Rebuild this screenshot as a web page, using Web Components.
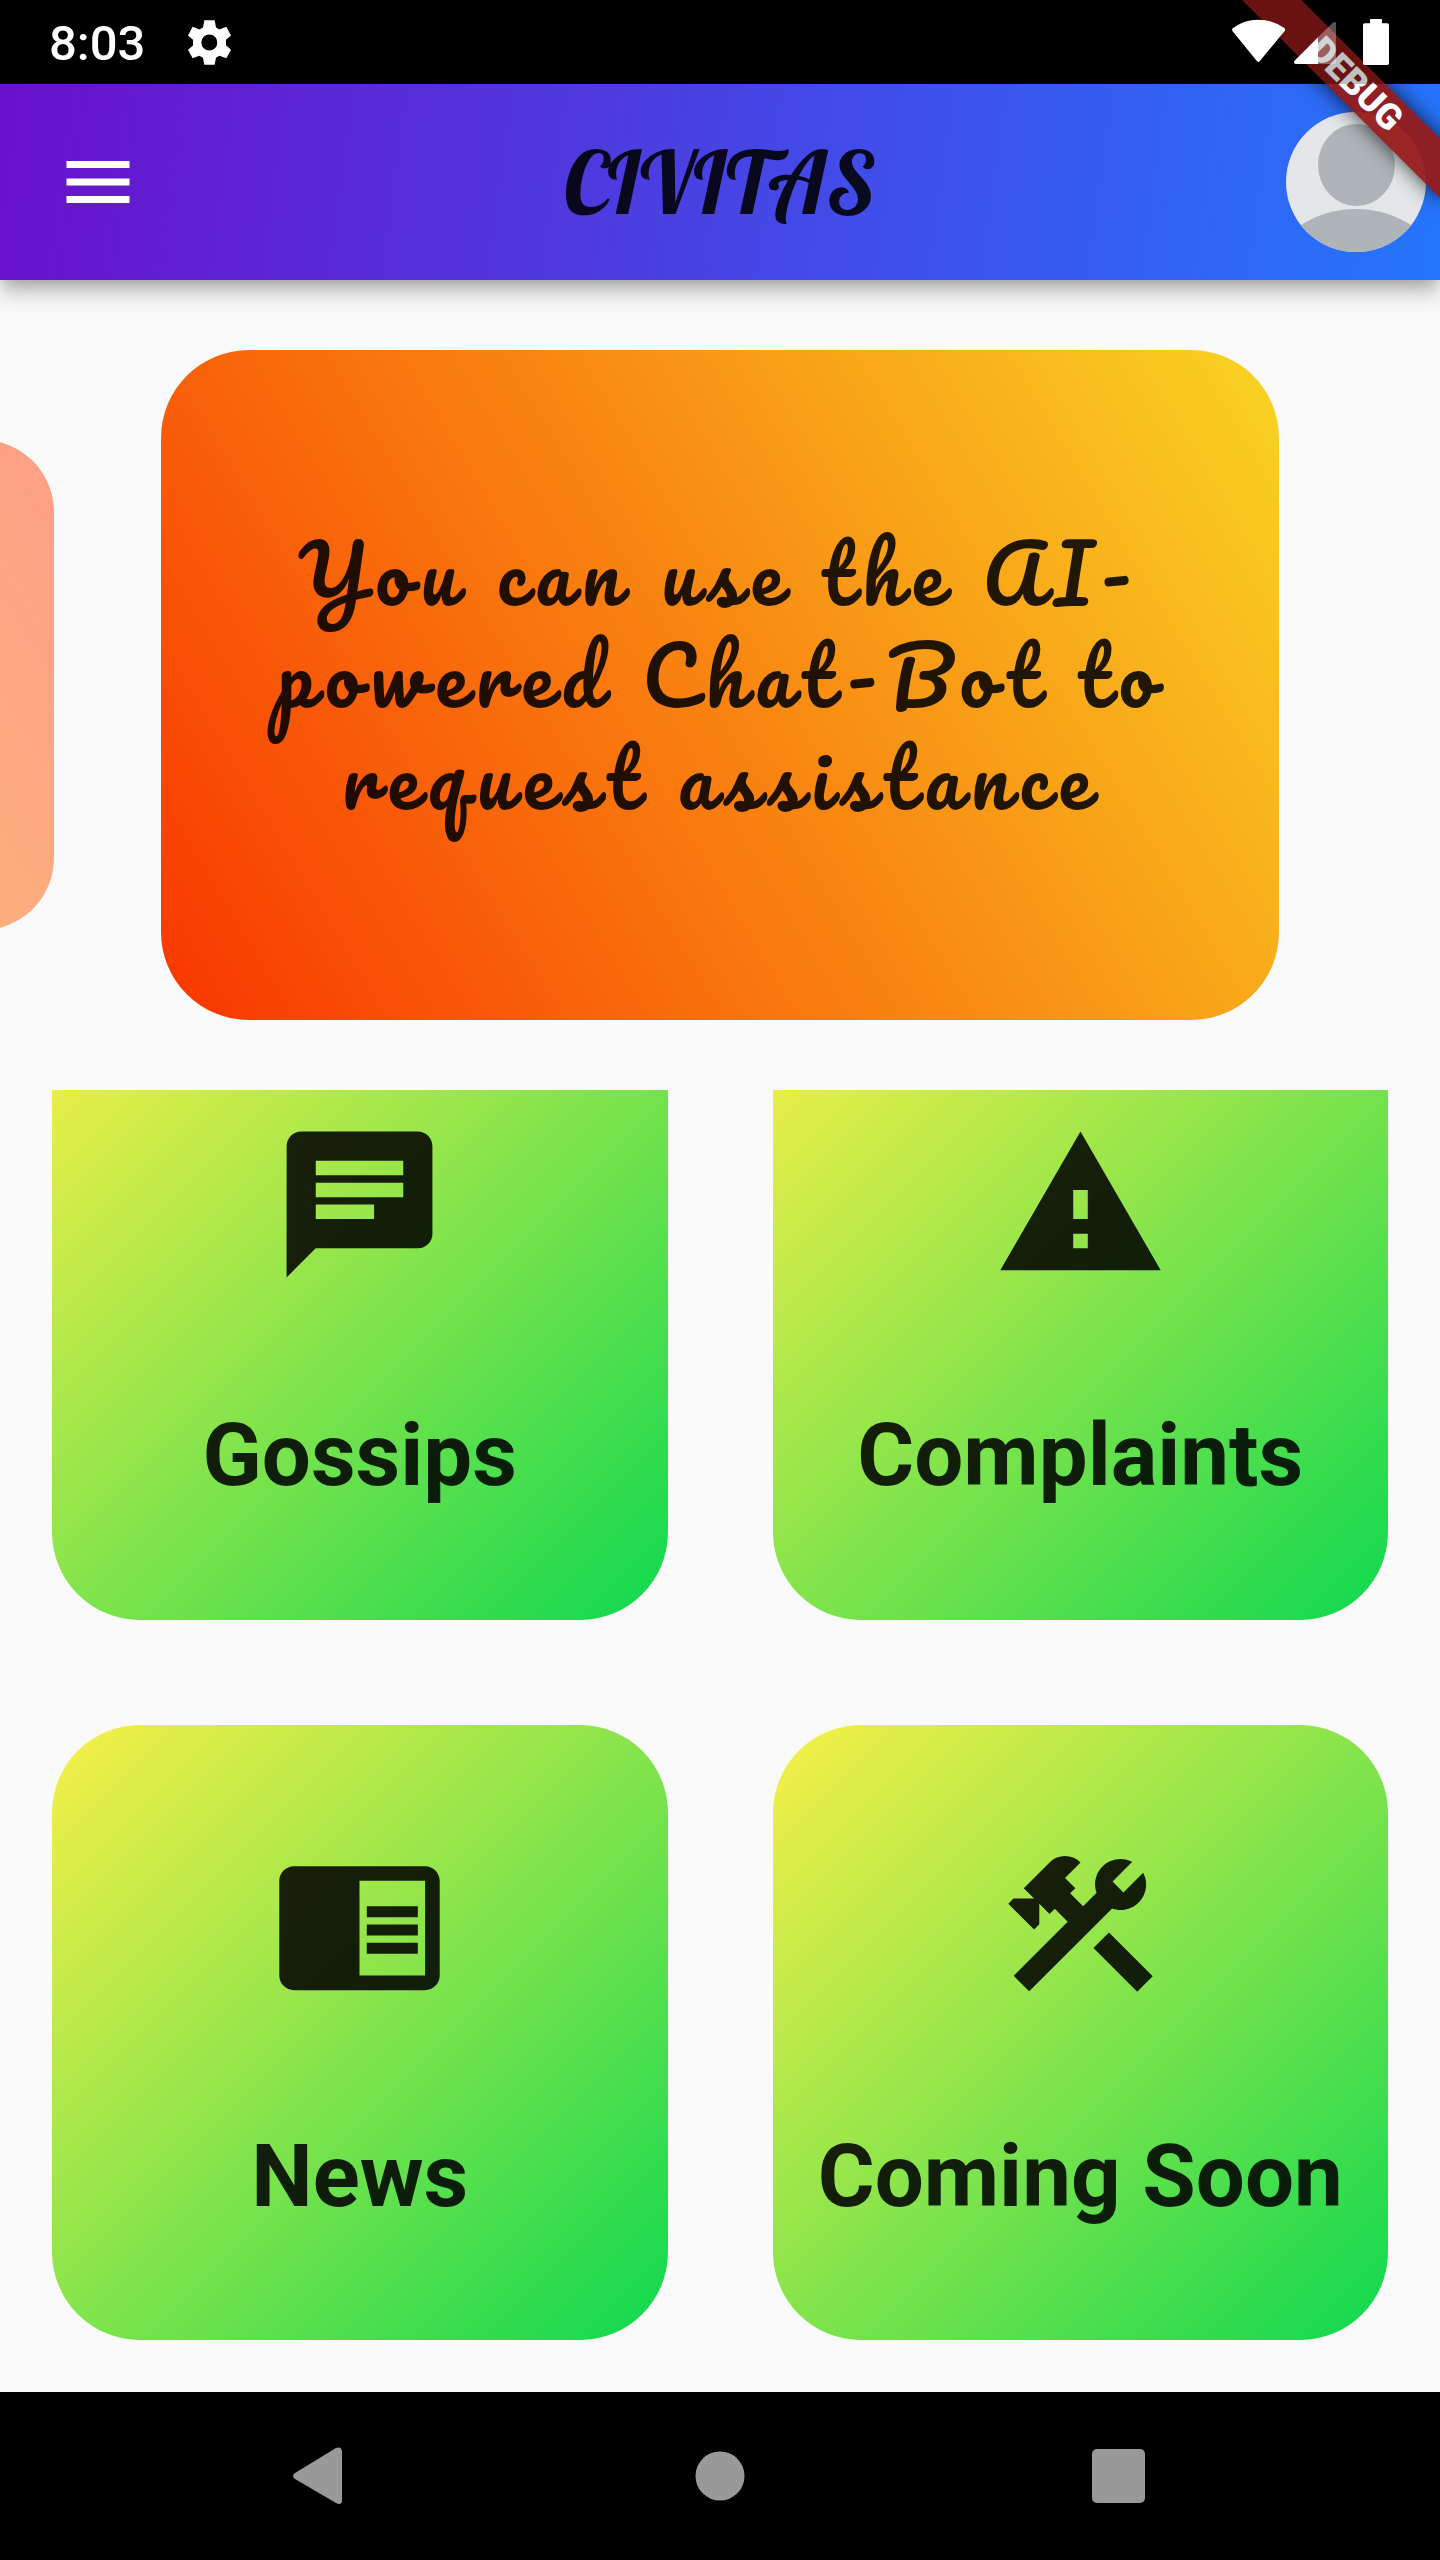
<!DOCTYPE html>
<html lang="en">
<head>
<meta charset="utf-8">
<meta name="viewport" content="width=device-width, initial-scale=1">
<title>Civitas</title>
<style>
  html, body { margin: 0; height: 100%; background: #000; }
  body { font-family: Roboto, "Liberation Sans", sans-serif; color: rgba(0, 0, 0, .87); }
</style>
</head>
<body>
<civitas-app>
  <status-bar slot="status">8:03</status-bar>
  <debug-ribbon slot="ribbon">DEBUG</debug-ribbon>
  <app-bar slot="bar">CIVITAS</app-bar>
  <tip-carousel slot="tips">
    <tip-card aside></tip-card>
    <tip-card>You can use the AI-powered Chat-Bot to request assistance</tip-card>
  </tip-carousel>
  <tile-grid slot="tiles">
    <tile-link icon="chat">Gossips</tile-link>
    <tile-link icon="warning">Complaints</tile-link>
    <tile-link icon="reader">News</tile-link>
    <tile-link icon="tools">Coming Soon</tile-link>
  </tile-grid>
  <system-nav slot="nav"></system-nav>
</civitas-app>

<script>
function define(name, html, setup) {
  const template = document.createElement('template');
  template.innerHTML = html;
  customElements.define(name, class extends HTMLElement {
    constructor() {
      super();
      this.attachShadow({ mode: 'open' }).append(template.content.cloneNode(true));
    }
    connectedCallback() { if (setup) setup(this, this.shadowRoot); }
  });
}

define('civitas-app', `
  <style>
    :host { display: flex; flex-direction: column; position: relative; height: 100vh; overflow: hidden; background: #000; }
    main { flex: 1; min-height: 0; display: flex; flex-direction: column; background: #fafafa; }
  </style>
  <slot name="status"></slot>
  <slot name="ribbon"></slot>
  <slot name="bar"></slot>
  <main><slot name="tips"></slot><slot name="tiles"></slot></main>
  <slot name="nav"></slot>`);

/* The bar is a translucent scrim above the ribbon, with the system icons on top of it. */
define('status-bar', `
  <style>
    :host { display: flex; align-items: center; height: 84px; flex: none; box-sizing: border-box; padding: 0 51px 0 49px; gap: 43px;
      position: relative; z-index: 3; background: rgba(0, 0, 0, .25); color: #fff; font-size: 49px; font-weight: 500; line-height: 60px; }
    time { padding-top: 4px; }
    .signals { margin-left: auto; }
    svg { display: block; fill: #fff; }
  </style>
  <time><slot></slot></time>
  <svg width="43" height="45" viewBox="564 60 129 134" aria-hidden="true">
    <path fill-rule="evenodd" d="M613 60H644L648 82L658 88L679 80L693 106L678 119V135L693 149L679 174L658 167L648 173L644 194H613L609 173L598 167L578 174L564 149L579 136V119L564 106L578 80L598 88L609 82ZM628 103A24 24 0 1 0 628 151A24 24 0 1 0 628 103Z"/>
  </svg>
  <svg class="signals" width="157" height="46" viewBox="216 57 471 138" aria-hidden="true">
    <path d="M219 84Q252 59 295 59Q338 59 373 84Q377 88 374 93L299 184Q295 188 291 184L218 94Q214 88 219 84Z"/>
    <path d="M474 112V192H407Q400 190 403 183Z"/>
    <path opacity=".33" d="M474 112L518 68Q524 64 528 68V187Q528 192 522 192H474Z"/>
    <path d="M630 57H666V70H682Q687 70 687 75V190Q687 195 682 195H614Q609 195 609 190V75Q609 70 614 70H630Z"/>
  </svg>`);

define('debug-ribbon', `
  <style>
    :host { display: block; position: absolute; z-index: 2; top: 98px; right: -140px; width: 280px; height: 42px;
      transform-origin: 140px -98px; transform: rotate(45deg); background: rgba(150, 25, 25, .94);
      box-shadow: 0 0 21px rgba(0, 0, 0, .75); color: #fff; text-align: center; font-size: 36px; font-weight: 900; line-height: 42px; }
  </style>
  <slot></slot>`);

define('app-bar', `
  <style>
    :host { display: grid; grid-template-columns: 1fr auto 1fr; align-items: center; flex: none; height: 196px; position: relative; z-index: 1;
      box-sizing: border-box; padding: 0 14px 0 56px; background: linear-gradient(98deg, #6a11cb, #2575fc);
      box-shadow: 0 7px 14px -4px rgba(0, 0, 0, .2), 0 14px 18px rgba(0, 0, 0, .14), 0 4px 35px rgba(0, 0, 0, .12); }
    button { border: 0; padding: 0; background: none; }
    svg { display: block; }
    .account { justify-self: end; border-radius: 50%; overflow: hidden; }
    h1 { margin: 0; font: 87px/110px Lobster, "Liberation Serif", serif; padding-right: 42px; }
  </style>
  <button aria-label="Menu"><svg width="84" height="84" viewBox="0 0 24 24" fill="#fff"><path d="M3 18h18v-2H3v2zm0-5h18v-2H3v2zm0-7v2h18V6H3z"/></svg></button>
  <h1><slot></slot></h1>
  <button class="account" aria-label="Account"><svg width="140" height="140" viewBox="0 0 140 140">
    <path fill="#e4e6e9" d="M0 0H140V140H0Z"/>
    <ellipse cx="70.500" cy="53" rx="38.500" ry="41" fill="#aeb4b8"/>
    <path fill="#aeb4b8" d="M15 113Q40 97 70 97Q100 97 125 113L140 140H0Z"/>
  </svg></button>`);

define('tip-carousel', `
  <style>
    :host { display: flex; flex: none; align-items: center; justify-content: flex-end; gap: 107px; padding: 70px 161px; overflow: hidden; }
  </style>
  <slot></slot>`);

define('tip-card', `
  <style>
    :host { display: flex; flex: 0 0 100%; align-items: center; justify-content: center; height: 670px; box-sizing: border-box; padding: 0 105px 20px;
      border-radius: 88px; background: linear-gradient(59deg, #f83600, #f9d423); }
    :host([aside]) { flex-basis: 73%; height: 490px; border-radius: 72px; background: linear-gradient(239deg, #fe9f87, #fcae7d 31%, #fcd090); }
    p { margin: 0; text-align: center; font: 78px/102px Pacifico, "Liberation Serif", serif; letter-spacing: 10px; }
  </style>
  <p><slot></slot></p>`);

define('tile-grid', `
  <style>
    :host { display: flex; flex: 1; min-height: 0; flex-direction: column; justify-content: flex-end; overflow: hidden; padding: 0 52px 52px; }
    nav { display: grid; grid-template-columns: 1fr 1fr; gap: 105px; }
  </style>
  <nav><slot></slot></nav>`);

const ICONS = {
  chat: '<path d="M20 2H4c-1.100 0-1.990.9-1.990 2L2 22l4-4h14c1.100 0 2-.9 2-2V4c0-1.100-.9-2-2-2zM6 9h12v2H6V9zm8 5H6v-2h8v2zm4-6H6V6h12v2z"/>',
  warning: '<path d="M1 21h22L12 2 1 21zm12-3h-2v-2h2v2zm0-4h-2v-4h2v4z"/>',
  reader: '<path d="M13 12h7v1.500h-7zm0-2.500h7V11h-7zm0 5h7V16h-7zM21 4H3c-1.100 0-2 .9-2 2v13c0 1.100.9 2 2 2h18c1.100 0 2-.9 2-2V6c0-1.100-.9-2-2-2zm0 15h-9V6h9v13z"/>',
  tools: '<path d="M13.780 15.220L15.900 13.100L21.900 19.090L19.780 21.220Z"/><path d="M17.500 10c1.930 0 3.500-1.570 3.500-3.500c0-.58-.16-1.120-.41-1.600l-2.700 2.700L16.400 6.110l2.700-2.700C18.620 3.160 18.080 3 17.500 3C15.570 3 14 4.570 14 6.500c0 .41.08.8.21 1.160l-1.850 1.850l-1.780-1.780l.71-.71L9.880 5.610L12 3.490c-1.170-1.170-3.070-1.170-4.240 0L4.220 7.030l1.410 1.410H2.810L2.100 9.150l3.540 3.540l.71-.71V9.150l1.410 1.410l.71-.71l1.780 1.780l-7.410 7.410l2.120 2.120L16.340 9.790C16.700 9.920 17.090 10 17.500 10z"/>'
};

define('tile-link', `
  <style>
    :host { display: block; aspect-ratio: 1; }
    a { display: flex; flex-direction: column; align-items: center; justify-content: space-evenly; height: 100%;
      border-radius: 88px; background: linear-gradient(135deg, #f9f047, #0fd850); color: inherit; text-decoration: none;
      font-size: 87px; font-weight: 700; line-height: 103px; white-space: nowrap; }
    svg { display: block; fill: rgba(0, 0, 0, .87); }
  </style>
  <a href="#"><svg width="175" height="175" viewBox="0 0 24 24" aria-hidden="true"></svg><span><slot></slot></span></a>`,
  (host, root) => { root.querySelector('svg').innerHTML = ICONS[host.getAttribute('icon')]; });

define('system-nav', `
  <style>
    :host { display: flex; flex: none; height: 168px; box-sizing: border-box; padding: 0 120px; background: #000; }
    button { flex: 1; display: flex; align-items: center; justify-content: center; border: 0; padding: 0; background: none; }
    svg { display: block; fill: #999; }
  </style>
  <button aria-label="Back"><svg width="60" height="60" viewBox="0 0 60 60"><path d="M5 27L46 2Q52 0 52 6V54Q52 60 46 57L5 33Q1 30 5 27Z"/></svg></button>
  <button aria-label="Home"><svg width="60" height="60" viewBox="0 0 60 60"><circle cx="30" cy="30" r="24.500"/></svg></button>
  <button aria-label="Recent apps"><svg width="60" height="60" viewBox="0 0 60 60"><rect x="2" y="3" width="53" height="54" rx="5"/></svg></button>`);
</script>
</body>
</html>
